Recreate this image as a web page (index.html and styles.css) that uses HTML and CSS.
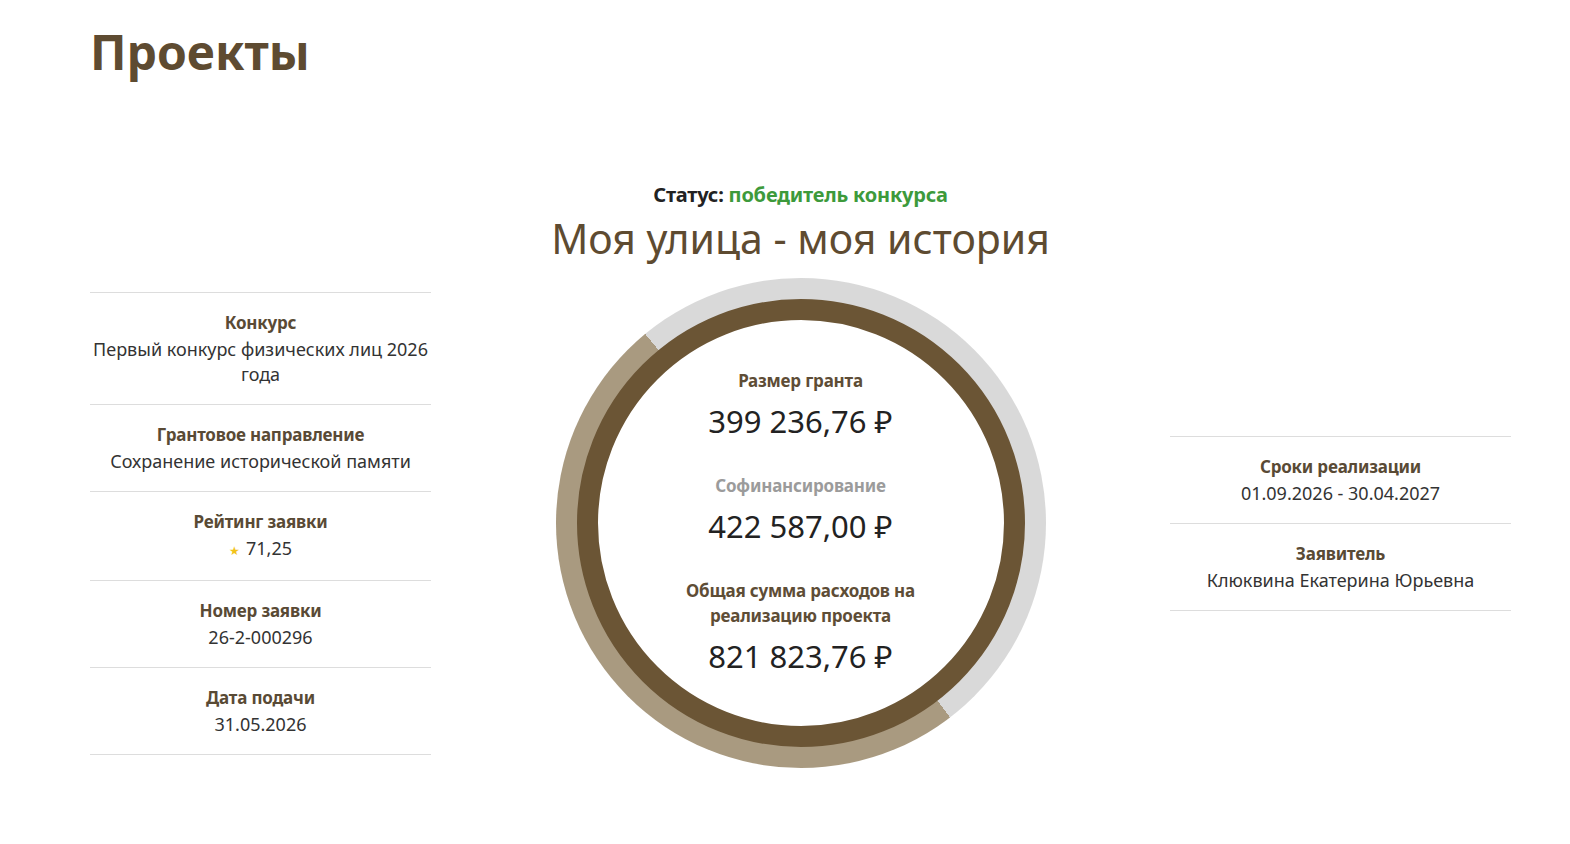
FILE: index.html
```html
<!DOCTYPE html>
<html lang="ru">
  <head>
    <meta charset="UTF-8" />
    <meta name="viewport" content="width=device-width, initial-scale=1.0" />
    <title>Проекты</title>
    <link rel="stylesheet" href="styles.css">
  </head>
  <body>
    <div class="page">
      <h1 class="page-title">Проекты</h1>

      <!-- Project header -->
      <div class="project-head">
        <div class="status">Статус: <span class="status-win">победитель конкурса</span></div>
        <h2 class="project-name">Моя улица - моя история</h2>
      </div>

      <div class="project-body">
        <!-- Left info column -->
        <div class="info-list">
          <div class="info-item">
            <div class="info-label">Конкурс</div>
            <div class="info-value">Первый конкурс физических лиц 2026 года</div>
          </div>
          <div class="info-item">
            <div class="info-label">Грантовое направление</div>
            <div class="info-value">Сохранение исторической памяти</div>
          </div>
          <div class="info-item">
            <div class="info-label">Рейтинг заявки</div>
            <div class="info-value"><span class="star">★</span>71,25</div>
          </div>
          <div class="info-item">
            <div class="info-label">Номер заявки</div>
            <div class="info-value">26-2-000296</div>
          </div>
          <div class="info-item">
            <div class="info-label">Дата подачи</div>
            <div class="info-value">31.05.2026</div>
          </div>
        </div>

        <!-- Budget circle -->
        <div class="budget">
          <div class="budget-inner">
            <div class="budget-label">Размер гранта</div>
            <div class="budget-sum">399 236,76 ₽</div>
            <div class="budget-label budget-label-muted">Софинансирование</div>
            <div class="budget-sum">422 587,00 ₽</div>
            <div class="budget-label">Общая сумма расходов на<br>реализацию проекта</div>
            <div class="budget-sum">821 823,76 ₽</div>
          </div>
        </div>

        <!-- Right info column -->
        <div class="info-list">
          <div class="info-item">
            <div class="info-label">Сроки реализации</div>
            <div class="info-value">01.09.2026 - 30.04.2027</div>
          </div>
          <div class="info-item">
            <div class="info-label">Заявитель</div>
            <div class="info-value">Клюквина Екатерина Юрьевна</div>
          </div>
        </div>
      </div>
    </div>
  </body>
</html>
```

FILE: styles.css
```css
* {
  margin: 0;
  padding: 0;
  box-sizing: border-box;
}
body {
  background-color: #fff;
  color: #333;
  font-family: "Noto Sans", "Open Sans", sans-serif;
}
.page {
  width: 1421px;
  margin-left: 90px;
  padding-top: 20px;
}
.page-title {
  font-size: 48px;
  line-height: 64px;
  font-weight: 700;
  color: #5e4b31;
}

/* Status and project name */
.project-head {
  text-align: center;
  margin-top: 98px;
}
.status {
  font-size: 20px;
  line-height: 26px;
  font-weight: 700;
  color: #222;
  letter-spacing: -0.2px;
}
.status-win {
  color: #3d9a3b;
}
.project-name {
  font-size: 41px;
  line-height: 54px;
  font-weight: 400;
  color: #5e4b31;
  margin-top: 3px;
  margin-bottom: 13px;
}

.project-body {
  display: flex;
  justify-content: space-between;
  align-items: center;
}

/* Info columns */
.info-list {
  width: 341px;
}
.info-item {
  border-top: 1px solid #ddd;
  padding: 15px 0 17px;
  text-align: center;
}
.info-item:last-child {
  border-bottom: 1px solid #ddd;
}
.info-label {
  font-size: 17px;
  line-height: 29px;
  font-weight: 700;
  color: #594a35;
  letter-spacing: -0.2px;
}
.info-value {
  font-size: 18px;
  line-height: 25px;
  color: #333;
}
.star {
  color: #f2c31b;
  font-size: 12px;
  margin-right: 6px;
}

/* Budget ring */
.budget {
  width: 490px;
  height: 490px;
  border-radius: 50%;
  padding: 21px;
  background: conic-gradient(from 142.5deg, #a99a80 0 178deg, #d9d9d9 178deg 360deg);
}
.budget-inner {
  width: 100%;
  height: 100%;
  border-radius: 50%;
  border: 21px solid #6b5535;
  background: #fff;
  display: flex;
  flex-direction: column;
  align-items: center;
  justify-content: center;
  text-align: center;
  padding-bottom: 3px;
}
.budget-label {
  font-size: 17px;
  line-height: 25px;
  font-weight: 700;
  color: #5e4d36;
  letter-spacing: -0.2px;
}
.budget-label-muted {
  color: #9b9b9b;
}
.budget-sum {
  font-size: 31px;
  line-height: 40px;
  color: #222;
  margin: 8px 0 32px;
}
.budget-sum:last-child {
  margin-bottom: 0;
}
```
